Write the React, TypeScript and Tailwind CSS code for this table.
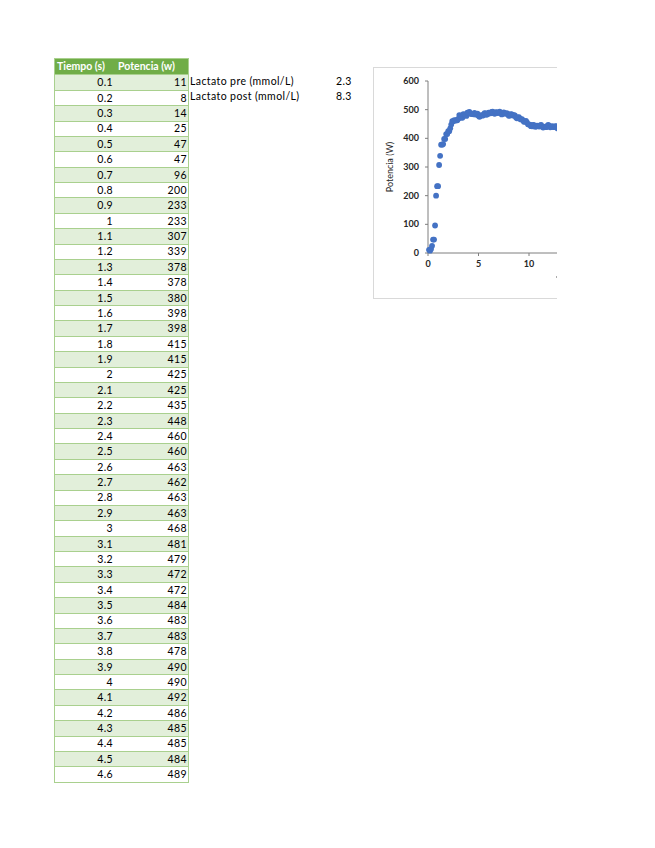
import React from "react";

const rows: [string, number][] = [
  ["0.1", 11], ["0.2", 8], ["0.3", 14], ["0.4", 25], ["0.5", 47], ["0.6", 47],
  ["0.7", 96], ["0.8", 200], ["0.9", 233], ["1", 233], ["1.1", 307], ["1.2", 339],
  ["1.3", 378], ["1.4", 378], ["1.5", 380], ["1.6", 398], ["1.7", 398], ["1.8", 415],
  ["1.9", 415], ["2", 425], ["2.1", 425], ["2.2", 435], ["2.3", 448], ["2.4", 460],
  ["2.5", 460], ["2.6", 463], ["2.7", 462], ["2.8", 463], ["2.9", 463], ["3", 468],
  ["3.1", 481], ["3.2", 479], ["3.3", 472], ["3.4", 472], ["3.5", 484], ["3.6", 483],
  ["3.7", 483], ["3.8", 478], ["3.9", 490], ["4", 490], ["4.1", 492], ["4.2", 486],
  ["4.3", 485], ["4.4", 485], ["4.5", 484], ["4.6", 489],
];

// rest of the series (only visible in the chart)
const tail: [number, number][] = [
  [4.6, 489], [5, 478], [5.5, 482], [6, 488], [6.5, 490], [7, 489], [7.5, 488],
  [8, 483], [8.5, 480], [9, 470], [9.5, 462], [10, 448], [10.5, 442], [11, 444],
  [11.5, 440], [12, 443], [12.5, 440], [13, 437],
];

function series() {
  const pts: [number, number][] = rows.map(([t, p]) => [parseFloat(t), p]);
  for (let i = 47; i <= 130; i++) {
    const t = i / 10;
    let k = 0;
    while (k < tail.length - 2 && tail[k + 1][0] < t) k++;
    const [t0, p0] = tail[k];
    const [t1, p1] = tail[k + 1];
    const base = p0 + ((p1 - p0) * (t - t0)) / (t1 - t0);
    const wobble = Math.sin(i * 1.7) * 3 + Math.cos(i * 0.9) * 2;
    pts.push([t, base + wobble]);
  }
  return pts;
}

const X0 = 54;
const Y0 = 185;
const sx = (t: number) => X0 + t * 10.1;
const sy = (p: number) => Y0 - p * (172 / 600);

function Chart() {
  const pts = series();
  return (
    <div className="mt-[9px] h-[232px] w-[184px] overflow-hidden border-y border-l border-[#d9d9d9] bg-white">
      <svg width="184" height="230" className="block">
        <line x1={X0} y1={Y0 - 172} x2={X0} y2={Y0} stroke="#7f7f7f" strokeWidth="1" />
        <line x1={X0} y1={Y0} x2={190} y2={Y0} stroke="#7f7f7f" strokeWidth="1" />
        {[0, 100, 200, 300, 400, 500, 600].map((v) => (
          <g key={v}>
            <line x1={X0 - 3} y1={sy(v)} x2={X0} y2={sy(v)} stroke="#7f7f7f" />
            <text x={45} y={sy(v) + 3} textAnchor="end" fontSize="9" fill="#262626" fontWeight="bold" fontFamily="Lato, sans-serif">
              {v}
            </text>
          </g>
        ))}
        {[0, 5, 10].map((v) => (
          <g key={v}>
            <line x1={sx(v)} y1={Y0} x2={sx(v)} y2={Y0 + 3} stroke="#7f7f7f" />
            <text x={sx(v)} y={Y0 + 14} textAnchor="middle" fontSize="9" fill="#262626" fontWeight="bold" fontFamily="Lato, sans-serif">
              {v}
            </text>
          </g>
        ))}
        <text
          transform="translate(19 99) rotate(-90)"
          textAnchor="middle"
          fontSize="9"
          fill="#262626"
          fontFamily="Lato, sans-serif"
        >
          Potencia (W)
        </text>
        <line x1={182} y1={209} x2={184} y2={209} stroke="#595959" />
        {pts.map(([t, p], i) => (
          <circle key={i} cx={sx(t)} cy={sy(p)} r="2.9" fill="#4472c4" />
        ))}
      </svg>
    </div>
  );
}

export default function App() {
  return (
    <div className="min-h-[848px] w-[655px] bg-white pl-[54px] pt-[58px] font-['Lato',sans-serif] text-[10.5px] text-black">
      <div className="flex items-start">
        {/* table */}
        <div className="w-[135px] border border-[#a9d08e]">
          <div className="flex h-[15.4px] items-center bg-[#70ad47] font-bold text-white">
            <div className="w-[62px] pl-[2px]">Tiempo (s)</div>
            <div className="flex-1 pl-[1px]">Potencia (w)</div>
          </div>
          {rows.map(([t, p], i) => (
            <div
              key={t}
              className={
                i % 2 === 0
                  ? "flex h-[15.38px] items-center border-t border-[#a9d08e] bg-[#e2efda] leading-none"
                  : "flex h-[15.38px] items-center border-t border-[#a9d08e] bg-white leading-none"
              }
            >
              <div className="w-[62px] pr-[4px] text-right tracking-[0.4px]">{t}</div>
              <div className="flex-1 pr-[1px] text-right tracking-[0.4px]">{p}</div>
            </div>
          ))}
        </div>

        {/* lactato */}
        <div className="mt-[16px] ml-[1px] w-[183px]">
          <div className="flex h-[15.4px] items-center">
            <span className="w-[146px] tracking-[0.4px]">Lactato pre (mmol/L)</span>
            <span className="tracking-[0.4px]">2.3</span>
          </div>
          <div className="flex h-[15.4px] items-center">
            <span className="w-[146px] tracking-[0.4px]">Lactato post (mmol/L)</span>
            <span className="tracking-[0.4px]">8.3</span>
          </div>
        </div>

        <Chart />
      </div>
    </div>
  );
}
